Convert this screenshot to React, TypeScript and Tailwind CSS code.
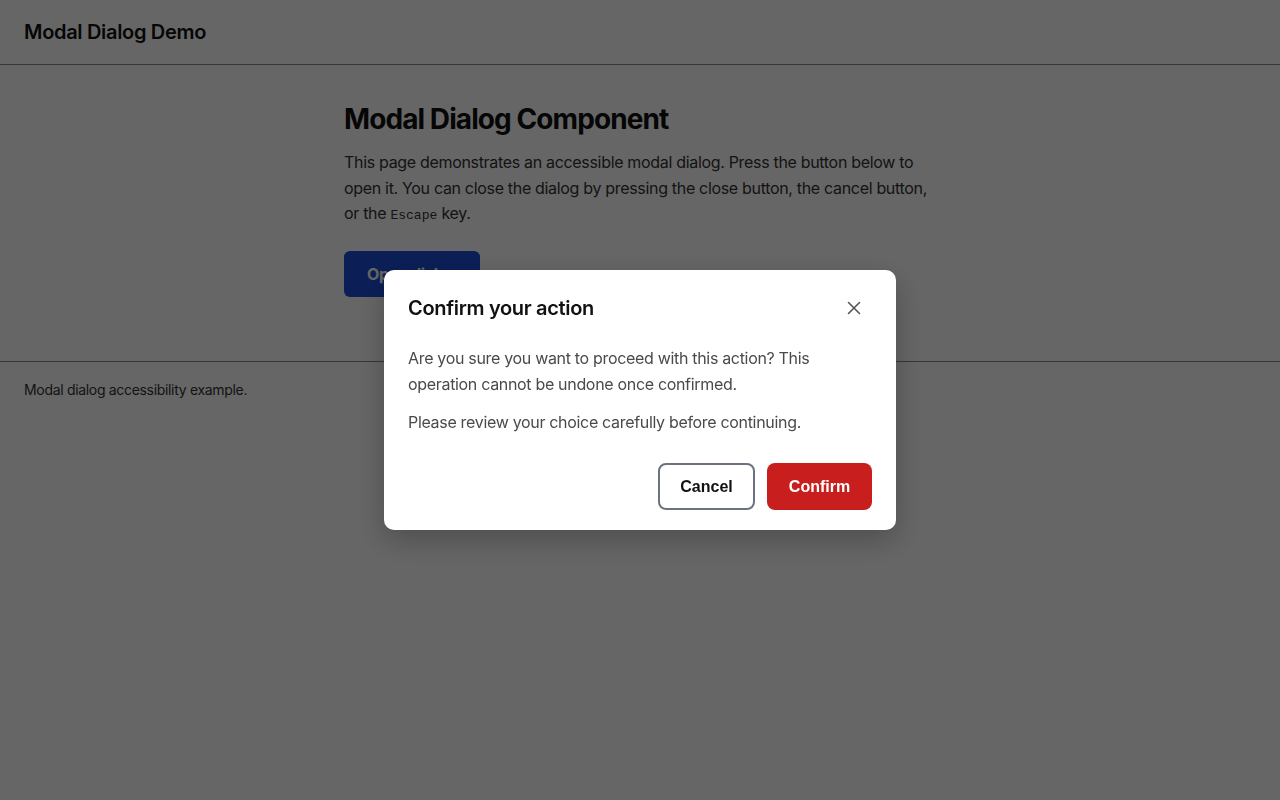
import React, { useState } from 'react'

const sans = 'font-["Inter","Noto_Sans",sans-serif] tracking-[-0.02em]'

const CloseIcon: React.FC = () => (
  <svg width="14" height="14" viewBox="0 0 14 14" fill="none" aria-hidden="true">
    <path d="M1.5 1.5l11 11M12.5 1.5l-11 11" stroke="#555" strokeWidth="1.6" strokeLinecap="round" />
  </svg>
)

const ConfirmDialog: React.FC<{ onClose: () => void }> = ({ onClose }) => (
  <div className="fixed inset-0 flex items-center justify-center bg-black/60">
    <div
      role="dialog"
      aria-modal="true"
      aria-labelledby="dialog-title"
      className="w-[512px] rounded-[10px] bg-white px-6 pt-6 pb-5 shadow-[0_10px_30px_rgba(0,0,0,0.25)]"
    >
      <div className="flex items-center justify-between">
        <h2 id="dialog-title" className="text-[20px] leading-7 font-semibold text-[#111]">
          Confirm your action
        </h2>
        <button
          type="button"
          aria-label="Close"
          onClick={onClose}
          className="-my-1 mr-0.5 flex h-8 w-8 items-center justify-center rounded-md"
        >
          <CloseIcon />
        </button>
      </div>
      <p className="mt-[23px] text-base leading-[26px] text-[#4a4a4a]">
        Are you sure you want to proceed with this action? This operation cannot be undone once
        confirmed.
      </p>
      <p className="mt-3 text-base leading-[26px] text-[#4a4a4a]">
        Please review your choice carefully before continuing.
      </p>
      <div className="mt-7 flex justify-end gap-3 font-['Liberation_Sans',Arial,sans-serif] tracking-normal">
        <button
          type="button"
          onClick={onClose}
          className="h-[47px] w-[97px] rounded-lg border-2 border-[#6b7280] bg-white text-base font-bold text-[#111]"
        >
          Cancel
        </button>
        <button
          type="button"
          onClick={onClose}
          className="h-[47px] w-[105px] rounded-lg bg-[#c81e1e] text-base font-bold text-white"
        >
          Confirm
        </button>
      </div>
    </div>
  </div>
)

const App: React.FC = () => {
  const [open, setOpen] = useState(true)

  return (
    <div className={`min-h-screen bg-white ${sans} text-[#111]`}>
      <header className="flex h-[65px] items-center border-b border-[#888] px-6">
        <h1 className="text-[20px] font-semibold">Modal Dialog Demo</h1>
      </header>
      <main className="mx-auto w-[592px] pt-[37px] pb-16">
        <h2 className="text-[28px] leading-[34px] font-bold tracking-[-0.033em]">
          Modal Dialog Component
        </h2>
        <p className="mt-[14px] text-base leading-[1.6] text-[#333]">
          This page demonstrates an accessible modal dialog. Press the button below to open it.
          You can close the dialog by pressing the close button, the cancel button, or the{' '}
          <code className="font-['Liberation_Mono',monospace] text-[13px] leading-none tracking-normal">
            Escape
          </code>{' '}
          key.
        </p>
        <button
          type="button"
          onClick={() => setOpen(true)}
          className="mt-6 h-[46px] w-[136px] rounded-md bg-[#1d4ed8] text-base font-bold text-white"
        >
          Open dialog
        </button>
      </main>
      <footer className="border-t border-[#888] px-6 pt-[18px] pb-4 text-sm text-[#333]">
        Modal dialog accessibility example.
      </footer>
      {open && <ConfirmDialog onClose={() => setOpen(false)} />}
    </div>
  )
}

export default App
